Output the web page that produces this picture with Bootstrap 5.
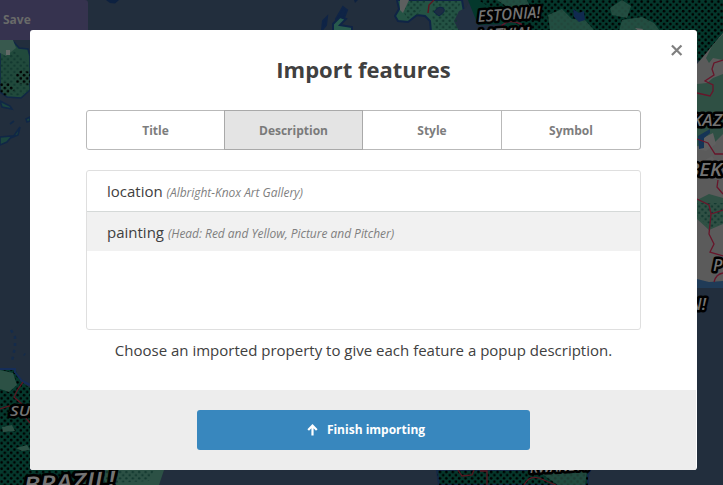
<!DOCTYPE html>
<html lang="en">
<head>
<meta charset="utf-8">
<title>Import features</title>
<meta name="viewport" content="width=device-width, initial-scale=1">
<link href="https://cdn.jsdelivr.net/npm/bootstrap@5.3.0/dist/css/bootstrap.min.css" rel="stylesheet">
<style>
  body { font-family: "Open Sans", sans-serif; font-size: 15px; line-height: 20px; color: #404040; background: #222e3d; height: 485px; padding-top: 30px; }
  .map-canvas { z-index: 0; }
  .save-tab { position: absolute; left: 0; top: 0; width: 88px; height: 40px; background: #36334f; color: #696a69; font-size: 12px; font-weight: 700; padding: 10px 3px; border-radius: 0 3px 3px 0; }
  .import-dialog { width: 667px; height: 440px; margin-left: 30px; border-radius: 3px; z-index: 1; overflow: hidden; }
  .dialog-main { height: 360px; padding: 24px 56px 0; }
  .dialog-title { font-size: 22px; line-height: 30px; font-weight: 700; margin-bottom: 26px; }
  .close-x { position: absolute; right: 14px; top: 14px; width: 13px; height: 13px; line-height: 0; }
  .pill-tabs { height: 40px; border: 1px solid #b9b9b9; border-radius: 3px; }
  .pill-tabs .tab-btn { border-radius: 0; border: 0; padding: 1px 0 0; font-size: 12px; font-weight: 700; color: #7d7d7d; width: 138px; flex: none; }
  .pill-tabs .tab-btn:first-child { width: 137px; }
  .pill-tabs .tab-btn:last-child { flex: 1 1 0; border-left: 1px solid #b9b9b9; }
  .pill-tabs .tab-btn.active { width: 139px; background: #e4e4e4; color: #7a7a7a; border: 1px solid #a9a9a9; margin: -1px 0; }
  .prop-list { height: 160px; margin-top: 20px; border: 1px solid #dfdfdf; border-radius: 3px; }
  .prop-row { height: 40px; padding: 10px 20px; white-space: nowrap; }
  .prop-row + .prop-row { border-top: 1px solid #d5d9d8; background: #f1f1f1; }
  .prop-row em { font-size: 12px; color: #7f7f7f; letter-spacing: -.03px; }
  .hint { padding-top: 10px; }
  .dialog-foot { height: 80px; margin-right: 1px; padding-top: 20px; background: #ededed; }
  .finish-btn { width: 333px; height: 40px; margin-left: 1px; background: #3887be !important; border: 0; border-radius: 3px; color: #fff !important; font-size: 12px; font-weight: 700; }
  .map-label { font-family: "Open Sans", sans-serif; font-weight: 600; font-style: italic; fill: #747474; stroke: #000; stroke-width: 5px; stroke-linejoin: round; paint-order: stroke; }
</style>
<script src="https://cdn.jsdelivr.net/npm/bootstrap@5.3.0/dist/js/bootstrap.bundle.min.js"></script>
</head>
<body class="position-relative overflow-hidden">
<svg class="map-canvas position-absolute top-0 start-0" width="723" height="485" viewBox="0 0 723 485" aria-hidden="true">
  <defs>
    <pattern id="dots" width="6.4" height="6.4" patternUnits="userSpaceOnUse">
      <circle cx="1.6" cy="1.6" r="1.3" fill="#000"/><circle cx="4.8" cy="4.8" r="1.3" fill="#000"/>
    </pattern>
    <pattern id="softdots" width="6.4" height="6.4" patternUnits="userSpaceOnUse">
      <circle cx="1.6" cy="1.6" r="1.2" fill="#12382f"/><circle cx="4.8" cy="4.8" r="1.2" fill="#12382f"/>
    </pattern>
  </defs>
  <!-- North Atlantic and Scandinavia -->
  <path d="M106 0h13l-4 3.500-5-.5z" fill="#0d2140"/>
  <path d="M354 0h4l-3 3z" fill="#0d2140"/>
  <g stroke="#0f2446" stroke-width="2">
    <path d="M343 7l4 3-3 8-6 5-2-4zM323 21l4-4-1 8-4 5z" fill="#0f2446"/>
    <path d="M333 31v-7l7-7 6 2-6 6 12 2v4z" fill="#285a4d"/>
    <path d="M397 0l2 9-4 7 3 5 10 1 9-7 8 1 5 5 1 11h29l-3-11 7-9-2-12z" fill="#245344"/>
    <path d="M482 0h-12l-4 8-7 3-5 10 5 10h36l-3-8 13-7 8-6z" fill="#222f42" stroke="none"/>
  </g>
  <path d="M400 0h9l-6 13-3-3z" fill="#5d5f5f"/>
  <path d="M403 12l8-12h15l-8 15-10 4z M433 1h28l-4 12 2 17h-24l-3-14z" fill="url(#softdots)"/>
  <path d="M434 12q5-7 9-4t-4 8z" fill="#1c2c42" stroke="#0f2446"/>
  <path d="M434 0l-5 5-1 8" fill="none" stroke="#5c1520" stroke-width="1.4"/>
  <!-- Northern Russia -->
  <path d="M468 0h255v38l-20 26-30-20H535l-8-14h-27l6-6-28 1z" fill="#04382c"/>
  <path d="M478 0h245v38l-20 26-30-20H535l-8-14z" fill="url(#dots)"/>
  <path d="M497 0h30l6 13-16 3-8-8z M548 15l14-6 10 10 13 1 9 10h-44z M610 8l12-8 9 6-4 12-15-3z M622 20l20-3 12 6 6 8h-41z" fill="#285245" opacity=".85"/>
  <path d="M573 9l6 4 5-2 1 9-6 2-5-5z" fill="#102a50"/>
  <path d="M635 28l8 1-2 4z" fill="#606060"/>
  <!-- Central Asia -->
  <path d="M697 64l26-31v255h-26z" fill="#5b5b5b"/>
  <path d="M706 58l6-12 11-12v26l-10-2-4 5z M697 84l10-1 6-5 10-4v60l-14 14-12-2z M697 200l12-6 14 4v26l-14 6-12-11z" fill="#2f5044"/>
  <path d="M697 203h26v20l-13 5-13-12z" fill="url(#softdots)"/>
  <path d="M703 138l10-5 3 11-10 7-9-2z M700 163l12-7 5 8-11 2z" fill="#606060"/>
  <path d="M698 136l12-7v4l-6 5 0 10-5 1z" fill="#153456"/>
  <path d="M723 60l-9 3-2 6 2 6-9 6 8 4v6l-3 5-13-3M697 139l11 4 7 11 8 0M718 180l-1 7 6 7M697 199l12 6 2 9 12-4M711 214l-2 20 5 10-4 8 13 4" fill="none" stroke="#68152a" stroke-width="1.3"/>
  <text class="map-label" x="692" y="126" font-size="17" textLength="30" lengthAdjust="spacingAndGlyphs">KAZ</text>
  <text class="map-label" x="687" y="176" font-size="18" textLength="35" lengthAdjust="spacingAndGlyphs">BEK</text>
  <text class="map-label" x="713" y="271" font-size="16">P</text>
  <path d="M697 279l12 3 14-1v16h-26z" fill="#203b57"/>
  <path d="M714 282q2-8 9-9" fill="none" stroke="#68152a" stroke-width="1.3"/>
  <path d="M697 288h26v29h-26z" fill="#222e3d"/>
  <text class="map-label" x="690" y="310" font-size="16" textLength="16" lengthAdjust="spacingAndGlyphs">N!</text>
  <!-- West coast islands -->
  <g stroke="#102746" stroke-width="1.6">
    <path d="M0 40h12l7 8 9 1 2 7v34l-9 8-14-1-7-5z" fill="#214a3c"/>
    <path d="M0 101l10 5 2 3-10-2zM30 117l-4 2 1 3 3-1zM20 127l-7 10 5-2zM0 137l12-1-5 6-7 3zM10 124l4-3" fill="#1c463f"/>
  </g>
  <path d="M0 54l14-3 16 12v27l-12 7-18-6z" fill="url(#softdots)"/>
  <path d="M16 73l6-3 8 2v13l-14-2z M0 83l9-1 6 8-10 6-5-4z" fill="url(#dots)"/>
  <path d="M0 40h13l3 8-10 8-6-3z" fill="#38594e"/>
  <path d="M6 50h4v5H6z" fill="#636a68"/>
  <path d="M11 330l4 7 0 10-3 14M24 354l1 1" fill="none" stroke="#142b4b" stroke-width="2.5" stroke-dasharray="3 4"/>
  <!-- South America -->
  <path d="M0 370l15-2 5 13 10 7v82h132l-5 15H0z" fill="#05392d"/>
  <path d="M0 370l15-2 5 13 10 7v82h50v15H0z" fill="url(#dots)"/>
  <path d="M0 370l13 3 4 12-8 7-9-3z M2 427l10-2 3 6-12 1z M16 448l11-3 3 5-8 1z M80 470h84l-5 15H80z" fill="#2c5145"/>
  <path d="M80 470h74l-5 11-69 4z" fill="url(#softdots)"/>
  <path d="M0 369h15v4M15 372l7 9 8 4" fill="none" stroke="#152d59" stroke-width="2"/>
  <path d="M23 382l-5 7-4 8 8 7-3 6M0 409l9-3 13 7 8 10" fill="none" stroke="#5a1722" stroke-width="1.3"/>
  <text class="map-label" x="10" y="416" font-size="15" textLength="30" lengthAdjust="spacingAndGlyphs">SUR</text>
  <text class="map-label" transform="translate(24 493) rotate(-4)" font-size="22" textLength="92" lengthAdjust="spacingAndGlyphs">BRAZIL!</text>
  <!-- Central Africa -->
  <path d="M437 470h153l-2 5v10H439z" fill="#05382c" stroke="#142947" stroke-width="2"/>
  <path d="M437 470h153l-2 5v10H439z" fill="url(#dots)"/>
  <path d="M542 474l9-3h36l-2 14h-27z" fill="#2a5145" opacity=".75"/>
  <path d="M458 470l4 6 10-1 2-5M480 471h7v14M524 485q5-10 15-7l17 7" fill="none" stroke="#5a1722" stroke-width="1.3"/>
  <text class="map-label" transform="translate(530 473) rotate(-3)" font-size="14" textLength="60" lengthAdjust="spacingAndGlyphs">RWANDA!</text>
  <!-- Baltic labels -->
  <path d="M501 27q6-9 20-3l2 5" fill="none" stroke="#68152a" stroke-width="1.4"/>
  <text class="map-label" transform="translate(478 22) rotate(-4)" font-size="16" textLength="63" lengthAdjust="spacingAndGlyphs">ESTONIA!</text>
  <text class="map-label" transform="translate(478 41) rotate(-3)" font-size="16" textLength="52" lengthAdjust="spacingAndGlyphs">LATVIA!</text>
</svg>
<div class="save-tab">Save</div>
<main class="import-dialog position-relative bg-white" role="dialog" aria-label="Import features">
  <button type="button" class="close-x btn p-0 border-0" aria-label="Close">
    <svg width="13" height="13" viewBox="0 0 13 13"><path d="M2.700 2.200l8 8m0-8l-8 8" stroke="#7f7f7f" stroke-width="2.200" stroke-linecap="square"/></svg>
  </button>
  <div class="dialog-main">
    <h1 class="dialog-title text-center">Import features</h1>
    <div class="pill-tabs d-flex" role="tablist">
      <button type="button" class="tab-btn btn">Title</button>
      <button type="button" class="tab-btn btn active">Description</button>
      <button type="button" class="tab-btn btn">Style</button>
      <button type="button" class="tab-btn btn">Symbol</button>
    </div>
    <div class="prop-list">
      <div class="prop-row">location <em>(Albright-Knox Art Gallery)</em></div>
      <div class="prop-row">painting <em>(Head: Red and Yellow, Picture and Pitcher)</em></div>
    </div>
    <p class="hint text-center mb-0">Choose an imported property to give each feature a popup description.</p>
  </div>
  <div class="dialog-foot d-flex justify-content-center align-items-start">
    <button type="button" class="finish-btn btn d-flex align-items-center justify-content-center p-0">
      <svg class="me-2 ms-1" width="13" height="14" viewBox="0 0 13 14"><path d="M6.500 12.500V2.500M2.200 7L6.500 2.500 10.800 7" fill="none" stroke="#fff" stroke-width="2.200" stroke-linecap="butt" stroke-linejoin="miter"/></svg>
      <span>Finish importing</span>
    </button>
  </div>
</main>
</body>
</html>
